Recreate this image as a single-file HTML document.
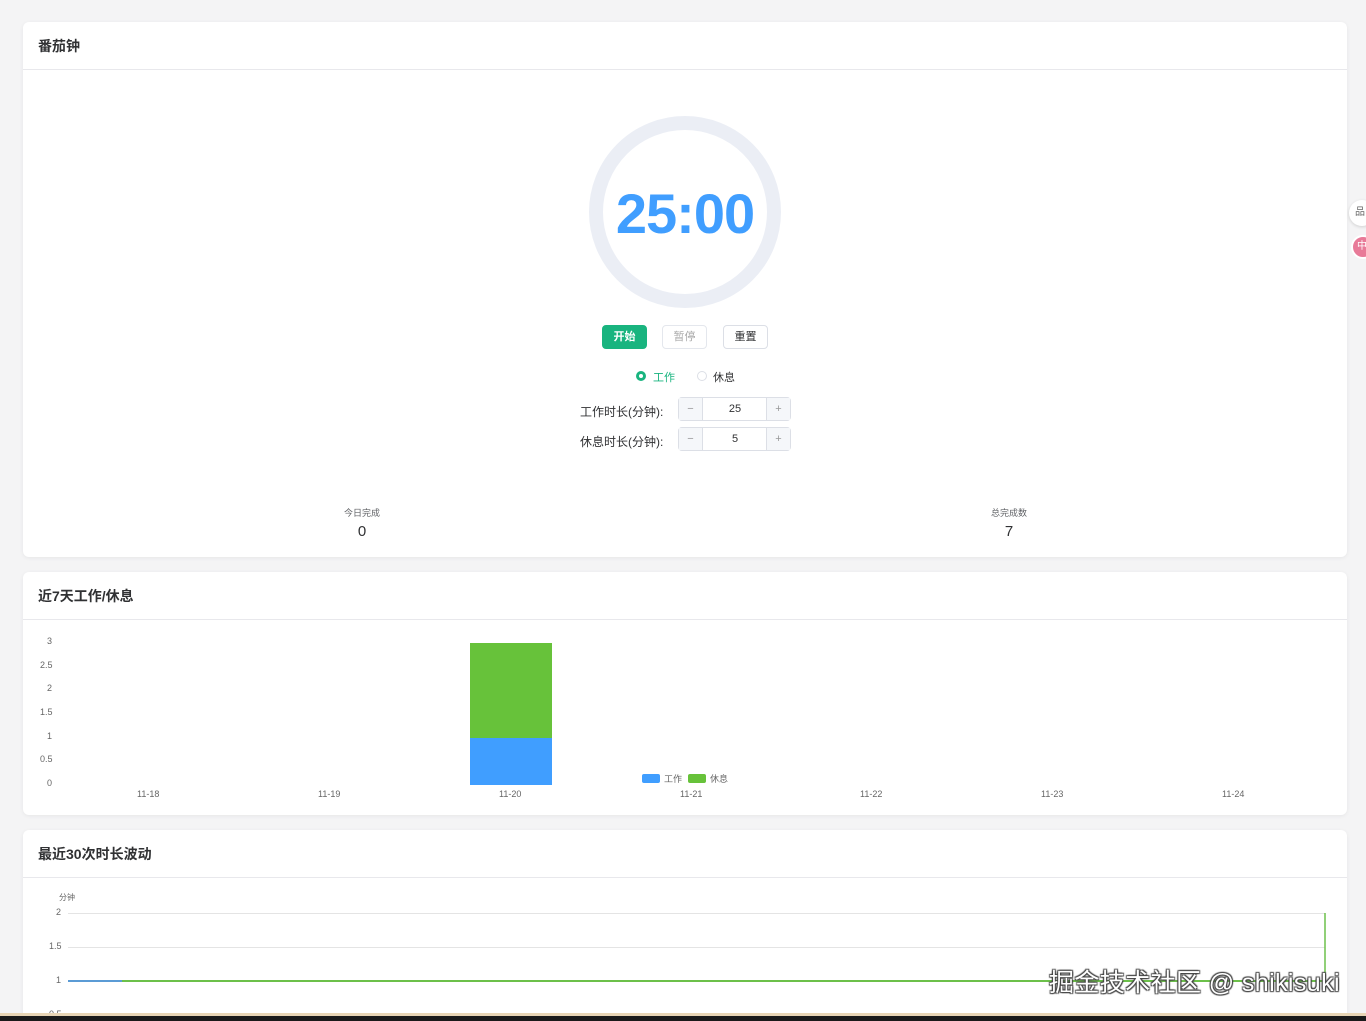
<!DOCTYPE html>
<html><head><meta charset="utf-8"><style>
*{box-sizing:border-box;margin:0;padding:0}
html,body{width:1366px;height:1021px;overflow:hidden}
body{background:#f4f4f5;font-family:"Liberation Sans","Noto Sans CJK SC",sans-serif;color:#303133;position:relative}
.card{position:absolute;left:23px;width:1324px;background:#fff;border-radius:6px;box-shadow:0 1px 4px rgba(0,0,0,.06);overflow:hidden}
.hd{height:48px;border-bottom:1px solid #e8e8ec;font-size:14px;font-weight:bold;line-height:48px;padding-left:15px;color:#303133}
.abs{position:absolute}
.btn{position:absolute;top:325px;height:24px;width:45px;border-radius:4px;font-size:11px;line-height:22px;text-align:center;border:1px solid #dcdfe6;background:#fff}
.lbl{font-size:11px;color:#606266}
.num{position:absolute;left:678px;width:113px;height:24px;border:1px solid #dcdfe6;border-radius:4px;font-size:11px}
.num span{position:absolute;top:0;height:22px;line-height:22px;text-align:center;color:#999}
.ax{position:absolute;font-size:9px;color:#666}
</style></head><body>
<div class="card" style="top:22px;height:535px">
<div class="hd">番茄钟</div>
</div>
<svg class="abs" style="left:580px;top:107px" width="210" height="210"><circle cx="105" cy="105" r="89" fill="none" stroke="#ebeef5" stroke-width="14"/></svg>
<div class="abs" style="left:585px;top:182px;width:200px;text-align:center;font-size:56px;font-weight:bold;color:#409eff;line-height:64px;letter-spacing:-1px">25:00</div>
<div class="btn" style="left:602px;background:#19b47f;border-color:#19b47f;color:#fff;font-weight:bold">开始</div>
<div class="btn" style="left:662px;color:#aaa;border-color:#e4e7ed">暂停</div>
<div class="btn" style="left:723px;color:#303133">重置</div>
<div class="abs" style="left:636px;top:371px;width:10px;height:10px;border-radius:50%;background:#19b47f"><div style="margin:3px;width:4px;height:4px;border-radius:50%;background:#fff"></div></div>
<div class="abs lbl" style="left:653px;top:369px;color:#19b47f">工作</div>
<div class="abs" style="left:697px;top:371px;width:10px;height:10px;border-radius:50%;border:1px solid #dcdfe6"></div>
<div class="abs lbl" style="left:713px;top:369px;color:#303133">休息</div>
<div class="abs lbl" style="left:580px;top:403px;font-size:12px;color:#303133">工作时长(分钟):</div>
<div class="abs lbl" style="left:580px;top:433px;font-size:12px;color:#303133">休息时长(分钟):</div>
<div class="num" style="top:397px"><span style="left:0;width:24px;background:#f5f7fa;border-right:1px solid #dcdfe6">−</span><span style="left:24px;width:64px;color:#303133">25</span><span style="right:0;width:24px;background:#f5f7fa;border-left:1px solid #dcdfe6">+</span></div>
<div class="num" style="top:427px"><span style="left:0;width:24px;background:#f5f7fa;border-right:1px solid #dcdfe6">−</span><span style="left:24px;width:64px;color:#303133">5</span><span style="right:0;width:24px;background:#f5f7fa;border-left:1px solid #dcdfe6">+</span></div>
<div class="abs" style="left:312px;top:506px;width:100px;text-align:center;font-size:9px;color:#606266">今日完成</div>
<div class="abs" style="left:312px;top:523px;width:100px;text-align:center;font-size:15px">0</div>
<div class="abs" style="left:959px;top:506px;width:100px;text-align:center;font-size:9px;color:#606266">总完成数</div>
<div class="abs" style="left:959px;top:523px;width:100px;text-align:center;font-size:15px">7</div>

<div class="card" style="top:572px;height:243px"><div class="hd">近7天工作/休息</div></div>
<div class="ax" style="left:47px;top:636px">3</div>
<div class="ax" style="left:40px;top:660px">2.5</div>
<div class="ax" style="left:47px;top:683px">2</div>
<div class="ax" style="left:40px;top:707px">1.5</div>
<div class="ax" style="left:47px;top:731px">1</div>
<div class="ax" style="left:40px;top:754px">0.5</div>
<div class="ax" style="left:47px;top:778px">0</div>
<div class="abs" style="left:470px;top:643px;width:82px;height:95px;background:#67c23a"></div>
<div class="abs" style="left:470px;top:738px;width:82px;height:47px;background:#409eff"></div>
<div class="ax" style="left:137px;top:789px">11-18</div>
<div class="ax" style="left:318px;top:789px">11-19</div>
<div class="ax" style="left:499px;top:789px">11-20</div>
<div class="ax" style="left:680px;top:789px">11-21</div>
<div class="ax" style="left:860px;top:789px">11-22</div>
<div class="ax" style="left:1041px;top:789px">11-23</div>
<div class="ax" style="left:1222px;top:789px">11-24</div>
<div class="abs" style="left:642px;top:774px;width:18px;height:9px;border-radius:2px;background:#409eff"></div>
<div class="ax" style="left:664px;top:772px">工作</div>
<div class="abs" style="left:688px;top:774px;width:18px;height:9px;border-radius:2px;background:#67c23a"></div>
<div class="ax" style="left:710px;top:772px">休息</div>

<div class="card" style="top:830px;height:200px"><div class="hd">最近30次时长波动</div></div>
<div class="ax" style="left:59px;top:892px;font-size:8px">分钟</div>
<div class="ax" style="left:56px;top:907px">2</div>
<div class="ax" style="left:49px;top:941px">1.5</div>
<div class="ax" style="left:56px;top:975px">1</div>
<div class="ax" style="left:49px;top:1009px">0.5</div>
<svg class="abs" style="left:0;top:900px" width="1366" height="121">
<line x1="68" y1="13.5" x2="1325" y2="13.5" stroke="#e4e4e4"/>
<line x1="68" y1="47.5" x2="1325" y2="47.5" stroke="#e4e4e4"/>
<line x1="68" y1="81" x2="122" y2="81" stroke="#5b9bd5" stroke-width="2"/>
<line x1="122" y1="81" x2="1325" y2="81" stroke="#6cc04a" stroke-width="2"/>
<line x1="1325" y1="81" x2="1325" y2="13" stroke="#6cc04a" stroke-width="1.5"/>
</svg>
<div class="abs" style="left:1049px;top:963px;font-size:25px;letter-spacing:0.4px;color:#fff;text-shadow:1px 1px 1px #444,-1px -1px 1px #444,1px -1px 1px #444,-1px 1px 1px #444">掘金技术社区 @ shikisuki</div>
<div class="abs" style="left:1349px;top:200px;width:26px;height:26px;border-radius:50%;background:#fff;box-shadow:0 1px 3px rgba(0,0,0,.15);font-size:10px;line-height:26px;padding-left:6px;color:#666">品</div>
<div class="abs" style="left:1351px;top:235px;width:24px;height:24px;border-radius:50%;background:#e87a98;border:2px solid #fff;color:#fff;font-size:10px;line-height:20px;padding-left:4px">中</div>
<div class="abs" style="left:0;top:1013px;width:1366px;height:3px;background:#e8d5b5"></div>
<div class="abs" style="left:0;top:1016px;width:1366px;height:5px;background:#1a1a1a"></div>
</body></html>
